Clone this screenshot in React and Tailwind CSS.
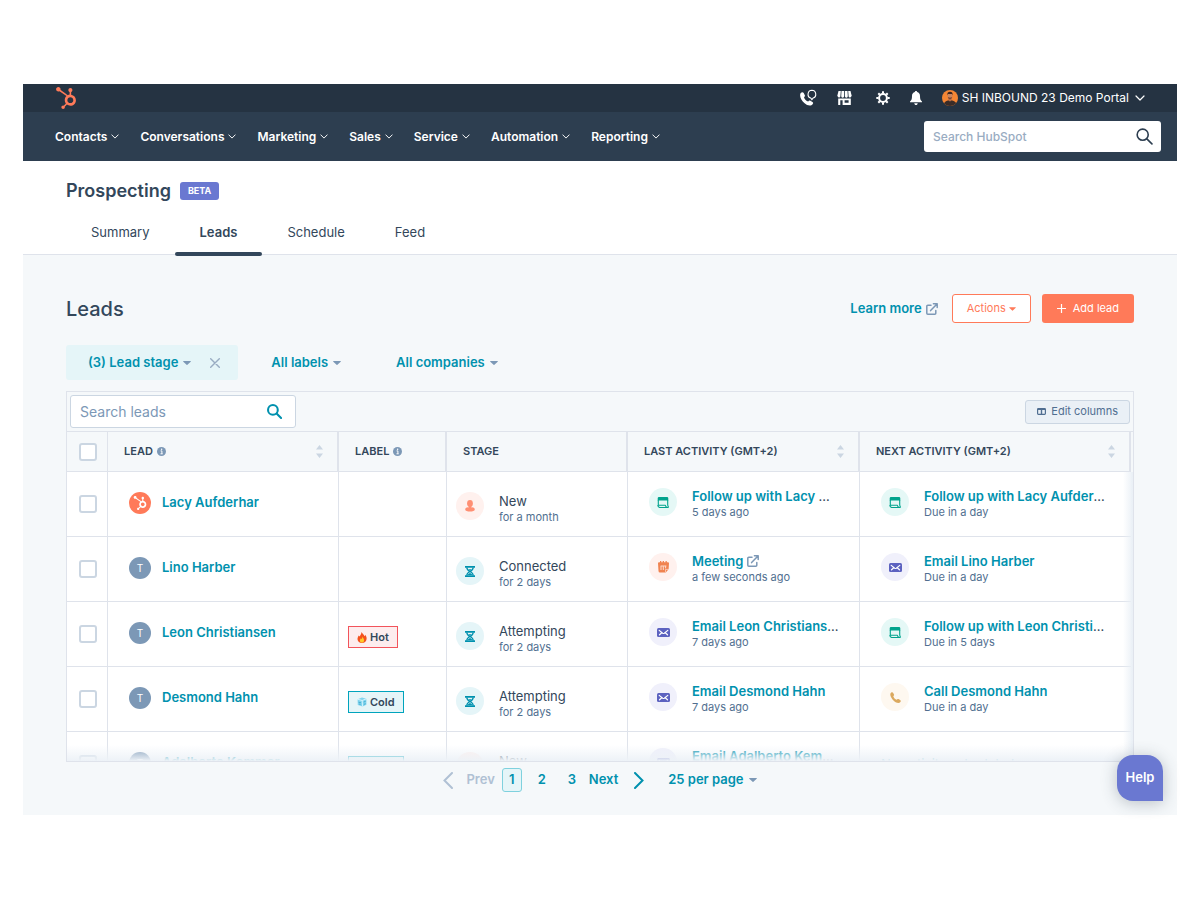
import React from "react";
import { FaHubspot } from "react-icons/fa";

const NAV = ["Contacts", "Conversations", "Marketing", "Sales", "Service", "Automation", "Reporting"];
const TABS = ["Summary", "Leads", "Schedule", "Feed"];

const ROWS = [
  {
    name: "Lacy Aufderhar", brand: true, label: null,
    stage: ["new", "New", "for a month"],
    last: ["task", "Follow up with Lacy ", "5 days ago", "cut"],
    next: ["task", "Follow up with Lacy Aufder", "Due in a day", "cut"],
  },
  {
    name: "Lino Harber", label: null,
    stage: ["wait", "Connected", "for 2 days"],
    last: ["meeting", "Meeting", "a few seconds ago", "external"],
    next: ["email", "Email Lino Harber", "Due in a day"],
  },
  {
    name: "Leon Christiansen", label: "Hot",
    stage: ["wait", "Attempting", "for 2 days"],
    last: ["email", "Email Leon Christians", "7 days ago", "cut"],
    next: ["task", "Follow up with Leon Christi", "Due in 5 days", "cut"],
  },
  {
    name: "Desmond Hahn", label: "Cold",
    stage: ["wait", "Attempting", "for 2 days"],
    last: ["email", "Email Desmond Hahn", "7 days ago"],
    next: ["call", "Call Desmond Hahn", "Due in a day"],
  },
  {
    name: "Adalberto Kemmer", label: "Cold",
    stage: ["new", "New", ""],
    last: ["email", "Email Adalberto Kem", "", "cut"],
    next: null,
  },
];

function Chevron({ className }) {
  return (
    <svg className={className} viewBox="0 0 10 6" fill="none" stroke="currentColor" strokeWidth="1.2" strokeLinecap="round" strokeLinejoin="round" aria-hidden="true">
      <path d="M1 1l4 4 4-4" />
    </svg>
  );
}

function Caret({ className }) {
  return (
    <svg className={className} viewBox="0 0 8 4" fill="currentColor" aria-hidden="true">
      <path d="M0.6 0h6.8a.4.4 0 0 1 .3.7L4.4 3.8a.6.6 0 0 1-.8 0L.3.7A.4.4 0 0 1 .6 0z" />
    </svg>
  );
}

function ExternalIcon() {
  return (
    <svg className="h-3 w-3 shrink-0 text-[#7c98b6]" viewBox="0 0 12 12" fill="none" stroke="currentColor" strokeWidth="1.5" strokeLinecap="round" strokeLinejoin="round" aria-hidden="true">
      <path d="M5 2.2H1.8a1 1 0 0 0-1 1v7a1 1 0 0 0 1 1h7a1 1 0 0 0 1-1V7.4" />
      <path d="M7.4.8h3.8v3.8M11 1L4.6 7.6" />
    </svg>
  );
}

function InfoIcon() {
  return (
    <svg className="h-[9px] w-[9px]" viewBox="0 0 9 9" aria-hidden="true">
      <circle cx="4.5" cy="4.5" r="4.5" fill="#7c98b6" />
      <path d="M3.6 3.9h1.3v2.8M3.5 6.8h2.2" stroke="#fff" strokeWidth="1" fill="none" />
      <circle cx="4.6" cy="2.2" r=".75" fill="#fff" />
    </svg>
  );
}

function Sort({ name }) {
  return (
    <button type="button" aria-label={"Sort by " + name} className="text-[#cbd6e2]">
      <svg className="h-[13px] w-[7px]" viewBox="0 0 7 13" fill="currentColor" aria-hidden="true">
        <path d="M3.5 0L7 4.5H0zM3.5 13L7 8.5H0z" />
      </svg>
    </button>
  );
}

function SearchIcon({ className, weight }) {
  return (
    <svg className={className} viewBox="0 0 16 16" fill="none" stroke="currentColor" strokeWidth={weight} strokeLinecap="round" aria-hidden="true">
      <circle cx="6.3" cy="6.3" r="5.2" />
      <path d="M10.2 10.2L15 15" />
    </svg>
  );
}

function Glyph({ kind }) {
  if (kind === "new")
    return (
      <svg className="h-[12px] w-[10px]" viewBox="0 0 10 12" fill="#ff8f73" aria-hidden="true">
        <ellipse cx="5" cy="3.5" rx="2.9" ry="3.4" />
        <rect x="3.7" y="5" width="2.6" height="3" />
        <path d="M.2 9.6C.2 8 1.6 7.300 3 7.300c.8.6 3.200.6 4 0 1.400 0 2.800.7 2.800 2.300 0 1.400-2.300 2-4.800 2S.2 11 .2 9.600z" />
      </svg>
    );
  if (kind === "wait")
    return (
      <svg className="h-[11px] w-[10px]" viewBox="0 0 10 11" fill="none" stroke="#0091ae" aria-hidden="true">
        <path d="M0 .9h10M0 10.100h10" strokeWidth="1.600" />
        <path d="M1.800 1.500c0 2.200 1.200 3 3.200 4-2 1-3.200 1.800-3.200 4M8.200 1.500c0 2.200-1.200 3-3.200 4 2 1 3.200 1.800 3.200 4" strokeWidth="1.300" />
        <path d="M3.300 3.200h3.400L5 4.700zM2.800 9c.4-1.200 1.200-1.800 2.200-1.800S6.800 7.800 7.200 9z" fill="#0091ae" stroke="none" />
      </svg>
    );
  if (kind === "task")
    return (
      <svg className="h-[11px] w-[12px]" viewBox="0 0 12 11" aria-hidden="true">
        <path d="M2 0h8a1.300 1.300 0 0 1 1.300 1.300V3.600H.7V1.300A1.300 1.300 0 0 1 2 0z" fill="#00a38d" />
        <path d="M1.300 3v5M10.700 3v4.600q0 1.300.6 2.300a.5.5 0 0 1-.5.600H2.600Q.9 9.900.8 8.200h7.600q.2 1.500 1.400 2.100" fill="none" stroke="#00a38d" strokeWidth="1.100" strokeLinejoin="round" />
      </svg>
    );
  if (kind === "meeting")
    return (
      <svg className="h-[12px] w-[11px]" viewBox="0 0 11 12" aria-hidden="true">
        <path d="M2 0h1.300v1.200h1.400V0H6v1.200h1.500V0h1.300v1.200h1.200a1 1 0 0 1 1 1L10.600 8.200 7.800 11.500H2A1.500 1.500 0 0 1 .5 10L0 2.200a1 1 0 0 1 1-1h1z" fill="#f08350" />
        <path d="M3 5.200v3.800M5.300 5.200v3.800M7.600 5.200v2.200M2.600 5h5.800" stroke="#fff1ee" strokeWidth=".8" fill="none" />
        <path d="M7.500 11.200V8.400h3" stroke="#fff1ee" strokeWidth=".6" fill="none" />
      </svg>
    );
  if (kind === "email")
    return (
      <svg className="h-[9px] w-[13px]" viewBox="0 0 13 9" aria-hidden="true">
        <rect width="13" height="9" rx="1.500" fill="#5c62c0" />
        <path d="M2.200 2.400l3.500 2.800q.8.6 1.600 0l3.500-2.800M2.500 6.800l2-1.800M10.500 6.800L8.500 5" stroke="#fff" strokeWidth="1.200" fill="none" strokeLinecap="round" />
      </svg>
    );
  return (
    <svg className="h-[11px] w-[11px]" viewBox="0 0 11 11" fill="#dba95f" aria-hidden="true">
      <path d="M1 .7C1.900 0 2.800.1 3.200.9l.8 1.700c.3.7 0 1.200-.7 1.700.3 1.500 1.900 3.100 3.400 3.500.5-.8 1.100-1 1.800-.7l1.600.9c.8.4.9 1.200.3 2-1.200 1.500-4.200 1.100-6.700-1.300C1 6.200-.8 2.500 1 .7z" />
    </svg>
  );
}

const TINT = {
  new: "bg-[#fff1ee]",
  wait: "bg-[#e5f5f8]",
  task: "bg-[#e5f8f6]",
  meeting: "bg-[#fff1ee]",
  email: "bg-[#f0f0fb]",
  call: "bg-[#fef8f0]",
};

function Bubble({ kind }) {
  return (
    <span className={"flex h-7 w-7 shrink-0 items-center justify-center rounded-full " + TINT[kind]}>
      <Glyph kind={kind} />
    </span>
  );
}

function Activity({ data }) {
  if (!data) return <div className="pl-[21px] pt-6 text-[13px] leading-4 text-[#0091ae]">No activity scheduled</div>;
  const [kind, title, sub, extra] = data;
  return (
    <div className="flex items-start gap-[15px] pl-[21px] pt-4">
      <Bubble kind={kind} />
      <div className="min-w-0 whitespace-nowrap">
        <div className="flex items-center gap-1 text-[13px] leading-4">
          <span>
            <a href="#activity" className="font-semibold text-[#0091ae]">{title}</a>
            {extra === "cut" ? "…" : null}
          </span>
          {extra === "external" ? <ExternalIcon /> : null}
        </div>
        <div className="text-[11px] leading-4 text-[#516f90]">{sub}</div>
      </div>
    </div>
  );
}

function Tag({ kind }) {
  const hot = kind === "Hot";
  return (
    <span className={"inline-flex h-[22px] items-center gap-[3px] border px-2 text-[11px] font-semibold " + (hot ? "border-[#f2545b] bg-[#fdedee]" : "border-[#00a4bd] bg-[#e5f5f8]")}>
      {hot ? (
        <svg className="h-[11px] w-[10px]" viewBox="0 0 10 11" aria-hidden="true">
          <path d="M4.600 0c.4 1.600 2.400 2.400 2.900 4.200.4-.3.600-.8.600-1.400C9.200 4 9.800 5.500 9.600 7 9.300 9.500 7.400 11 5 11S.6 9.400.5 7.200C.4 5.500 1.200 4.500 1.700 3.400c.3.400.5.700.6 1.200C3.400 3.400 4.400 1.900 4.600 0z" fill="#f4511e" />
          <path d="M5.200 4.200c.1 1.300 1.900 2.200 1.900 4.100 0 1.400-.9 2.300-2.100 2.300S2.800 9.700 2.900 8.400C3 7.300 3.600 7 3.800 6.300c.4.200.5.500.6.900.6-.8.900-1.700.8-3z" fill="#ffca28" />
        </svg>
      ) : (
        <svg className="h-[10px] w-[10px]" viewBox="0 0 10 10" aria-hidden="true">
          <path d="M.6 2.200L5 .6l4.400 1.200v6L5.600 9.500.8 8z" fill="#81d4ee" />
          <path d="M.6 2.200l4.600 1.300 4.200-1.700M5.200 3.500l.4 6" stroke="#e8faff" strokeWidth=".8" fill="none" />
          <path d="M1.500 5.200l2.500.6M6.800 5l1.800-.7M2 7l1.600.4M6.900 7.400l1.700-.7" stroke="#38a5c8" strokeWidth=".8" />
        </svg>
      )}
      {kind}
    </span>
  );
}

function Check({ label }) {
  return (
    <input type="checkbox" aria-label={label} className="block h-[18px] w-[18px] appearance-none rounded-[3px] border-2 border-[#cbd6e2] bg-white checked:bg-[#00a4bd]" />
  );
}

function Avatar() {
  return (
    <svg className="h-4 w-4" viewBox="0 0 16 16" aria-hidden="true">
      <defs>
        <clipPath id="avatar-round"><circle cx="8" cy="8" r="8" /></clipPath>
      </defs>
      <g clipPath="url(#avatar-round)">
        <rect width="16" height="16" fill="#f58634" />
        <path d="M1.500 16c0-3.500 2-5.500 6.500-6 4.500.5 7 2.500 7 6z" fill="#3a2c28" />
        <path d="M6.400 8h3.200v2.600L8 11.600l-1.600-1z" fill="#b96f49" />
        <ellipse cx="8" cy="5.800" rx="2.300" ry="3.100" fill="#c98560" />
        <path d="M5.400 5.400C5 2.800 6.200 1.700 8 1.700s3 1.100 2.600 3.700L10 4H6z" fill="#3b2520" />
        <path d="M5.800 6.800c.2 1.600.9 2.400 2.200 2.400s2-.8 2.200-2.400l-1 .6H6.800z" fill="#7a4530" />
      </g>
    </svg>
  );
}

function TopBar() {
  return (
    <div className="flex h-7 items-center justify-between bg-[#253342] pl-8 pr-8">
      <a href="#home" aria-label="HubSpot" className="text-[#ff7a59]"><FaHubspot className="h-[22px] w-[22px]" /></a>
      <div className="flex items-center text-white">
        <button type="button" aria-label="Calling" className="mr-5">
          <svg className="h-[18px] w-[18px]" viewBox="0 0 18 18" aria-hidden="true">
            <path d="M2 3.700C3 2.900 4.200 3 4.700 4L5.800 6.200c.4.8.1 1.400-.8 2 .5 1.800 2.400 3.900 4.200 4.300.7-1 1.300-1.200 2.200-.8l2 1.200c.9.5 1 1.400.2 2.400-1.500 1.900-5.300 1.600-8.300-1.300C1.700 10.700-.1 5.800 2 3.700z" fill="currentColor" />
            <path d="M12.900 1.300a4 4 0 0 1 1.100 7.800l-1.100 1.400-1.100-1.400a4 4 0 0 1 1.100-7.800z" fill="none" stroke="currentColor" strokeWidth="1.100" />
          </svg>
        </button>
        <button type="button" aria-label="Marketplace" className="mr-6">
          <svg className="h-[14px] w-[15px]" viewBox="0 0 15 14" fill="currentColor" aria-hidden="true">
            <path d="M1.500 0h2.300l-.4 5.200a1.300 1.300 0 0 1-2.600 0H.2zM4.500 0h2.600v5.200a1.400 1.400 0 0 1-2.900 0zM7.900 0h2.600l.3 5.200a1.400 1.400 0 0 1-2.900 0zM11.200 0h2.300l1.300 5.200h-.6a1.300 1.300 0 0 1-2.600 0z" />
            <path fillRule="evenodd" d="M1.200 7.400h12.600V14H1.200zM3.300 9.300v4.700h2.300V9.300zm4.300 0v2.500h4V9.300z" />
          </svg>
        </button>
        <button type="button" aria-label="Settings" className="mr-5">
          <svg className="h-[14px] w-[14px]" viewBox="0 0 14 14" fill="none" stroke="currentColor" aria-hidden="true">
            <circle cx="7" cy="7" r="3.900" strokeWidth="2" />
            <path d="M7 .3v2.200M7 11.500v2.200M.3 7h2.200M11.500 7h2.200M2.300 2.300l1.500 1.500M10.200 10.200l1.500 1.500M11.700 2.300l-1.500 1.500M3.800 10.200l-1.500 1.500" strokeWidth="2" />
          </svg>
        </button>
        <button type="button" aria-label="Notifications" className="mr-5">
          <svg className="h-[14px] w-[12px]" viewBox="0 0 12 14" fill="currentColor" aria-hidden="true">
            <path d="M6 0c.7 0 1.100.4 1.100 1C9 1.500 10 3 10 5c0 3 .5 4.300 2 5.400v.9H0v-.9C1.500 9.300 2 8 2 5c0-2 1-3.500 2.900-4C4.900.4 5.300 0 6 0zM4.300 12.200h3.400C7.600 13.300 7 14 6 14s-1.600-.7-1.700-1.800z" />
          </svg>
        </button>
        <button type="button" className="flex items-center gap-1 text-xs">
          <Avatar />
          SH INBOUND 23 Demo Portal
          <Chevron className="ml-[2px] h-[6px] w-[10px]" />
        </button>
      </div>
    </div>
  );
}

function MainNav() {
  return (
    <div className="flex h-[49px] items-center justify-between bg-[#2d3e50] pl-8 pr-4">
      <nav className="flex gap-[21px] text-xs font-semibold text-white">
        {NAV.map((n) => (
          <button type="button" key={n} className="flex items-center gap-1">
            {n}
            <Chevron className="h-[5px] w-2" />
          </button>
        ))}
      </nav>
      <label className="flex h-[31px] w-[237px] items-center rounded-[3px] bg-white pl-[9px] pr-2">
        <input type="text" aria-label="Search HubSpot" placeholder="Search HubSpot" className="min-w-0 flex-1 bg-transparent text-xs font-medium text-[#33475b] outline-none placeholder:text-[#99acc2]" />
        <SearchIcon className="h-[17px] w-[17px] text-[#2d3e50]" weight="1.5" />
      </label>
    </div>
  );
}

function Th({ children, sort }) {
  return (
    <th scope="col" className="border-r-2 border-[#dfe3eb] py-0 pl-4 text-left text-[11px] font-semibold">
      <div className="flex items-center justify-between pr-[14px]">
        <span className="flex items-center gap-1">{children}</span>
        {sort ? <Sort name={sort} /> : null}
      </div>
    </th>
  );
}

function LeadsTable() {
  return (
    <div className="relative h-[330px] overflow-hidden border-t border-[#dfe3eb] pr-[2px]">
      <table className="w-full table-fixed border-separate border-spacing-0">
        <colgroup>
          <col className="w-[41px]" />
          <col className="w-[231px]" />
          <col className="w-[108px]" />
          <col className="w-[181px]" />
          <col className="w-[232px]" />
          <col />
        </colgroup>
        <thead>
          <tr className="h-[39px] bg-[#f5f8fa]">
            <th scope="col" className="border-r border-[#dfe3eb] py-0 pl-3"><Check label="Select all leads" /></th>
            <Th sort="lead">LEAD <InfoIcon /></Th>
            <Th>LABEL <InfoIcon /></Th>
            <Th>STAGE</Th>
            <Th sort="last activity">LAST ACTIVITY (GMT+2)</Th>
            <Th sort="next activity">NEXT ACTIVITY (GMT+2)</Th>
          </tr>
        </thead>
        <tbody className="bg-white [&_td]:border-t [&_td]:border-r [&_td]:border-[#dfe3eb] [&_td]:p-0">
          {ROWS.map((r) => (
            <tr key={r.name} className="h-[65px] align-top">
              <td><div className="pl-3 pt-[23px]"><Check label={"Select " + r.name} /></div></td>
              <td>
                <div className="flex items-center gap-[11px] pl-[21px] pt-5">
                  {r.brand ? (
                    <span className="flex h-[22px] w-[22px] items-center justify-center rounded-full bg-[#ff7a59] text-white"><FaHubspot className="h-[14px] w-[14px]" /></span>
                  ) : (
                    <span className="flex h-[22px] w-[22px] items-center justify-center rounded-full bg-[#7c98b6] text-[10px] text-white">T</span>
                  )}
                  <a href="#lead" className="text-[13px] font-semibold text-[#0091ae]">{r.name}</a>
                </div>
              </td>
              <td><div className="flex pl-[9px] pt-6">{r.label ? <Tag kind={r.label} /> : null}</div></td>
              <td>
                <div className="flex items-start gap-[15px] pl-[9px] pt-5">
                  <Bubble kind={r.stage[0]} />
                  <div className="pt-px">
                    <div className="text-[13px] leading-4">{r.stage[1]}</div>
                    <div className="text-[11px] leading-4 text-[#516f90]">{r.stage[2]}</div>
                  </div>
                </div>
              </td>
              <td><Activity data={r.last} /></td>
              <td className="!border-r-0"><Activity data={r.next} /></td>
            </tr>
          ))}
        </tbody>
      </table>
      <div className="pointer-events-none absolute bottom-0 right-0 top-10 w-[10px] bg-gradient-to-r from-[#eaf0f6]/0 to-[#eaf0f6]" />
      <div className="pointer-events-none absolute inset-x-0 bottom-0 h-4 bg-gradient-to-b from-[#f5f8fa]/0 to-[#edf2f7]" />
    </div>
  );
}

export default function App() {
  return (
    <div className="bg-white px-[23px] pb-[84px] pt-[84px] font-['Inter','Liberation_Sans',sans-serif] text-[#33475b]">
      <div className="relative">
        <header>
          <TopBar />
          <MainNav />
        </header>
        <div className="border-b border-[#dfe3eb] bg-white pl-[43px]">
          <div className="flex items-center gap-[9px] pt-4">
            <h1 className="text-lg font-semibold leading-7">Prospecting</h1>
            <span className="rounded-[3px] bg-[#6a78d1] px-2 text-[9px] font-bold leading-[18px] text-white">BETA</span>
          </div>
          <nav className="-mb-[2px] flex pt-[17px] text-[13px] leading-5">
            {TABS.map((t) => (
              <a
                key={t}
                href="#tab"
                className={"relative px-[25px] pb-[14px] " + (t === "Leads" ? "font-semibold after:absolute after:inset-x-0 after:bottom-0 after:h-1 after:rounded-sm after:bg-[#33475b]" : "")}
              >
                {t}
              </a>
            ))}
          </nav>
        </div>
        <main className="bg-[#f5f8fa] px-[43px] pb-[23px] pt-[39px]">
          <div className="flex items-center justify-between">
            <h2 className="text-xl font-medium leading-7">Leads</h2>
            <div className="flex items-center">
              <a href="#learn" className="mr-[14px] flex items-center gap-1 text-[13px] font-semibold text-[#0091ae]">Learn more <ExternalIcon /></a>
              <button type="button" className="mr-[11px] flex h-[29px] items-center gap-[3px] rounded-[3px] border border-[#ff7a59] bg-white px-[14px] text-[11px] text-[#ff7a59]">
                Actions <Caret className="h-1 w-[7px]" />
              </button>
              <button type="button" className="flex h-[29px] items-center gap-[7px] rounded-[3px] bg-[#ff7a59] px-[15px] text-[11px] text-white">
                <svg className="h-[9px] w-[9px]" viewBox="0 0 9 9" stroke="currentColor" strokeWidth="1.200" aria-hidden="true"><path d="M4.500 0v9M0 4.500h9" /></svg>
                Add lead
              </button>
            </div>
          </div>
          <div className="mt-[22px] flex items-center text-[13px] font-semibold text-[#0091ae]">
            <div className="flex h-[35px] items-center rounded-[3px] bg-[#e5f5f8] pl-[22px] pr-[18px]">
              <button type="button" className="flex items-center gap-[5px]">(3) Lead stage <Caret className="h-1 w-2 text-[#7c98b6]" /></button>
              <button type="button" aria-label="Clear lead stage" className="ml-[19px] text-[#99acc2]">
                <svg className="h-[10px] w-[10px]" viewBox="0 0 10 10" stroke="currentColor" strokeWidth="1.400" strokeLinecap="round" aria-hidden="true"><path d="M.7.7l8.600 8.600M9.300.7L.7 9.300" /></svg>
              </button>
            </div>
            <button type="button" className="ml-[33px] flex items-center gap-[5px]">All labels <Caret className="h-1 w-2 text-[#7c98b6]" /></button>
            <button type="button" className="ml-[55px] flex items-center gap-[5px]">All companies <Caret className="h-1 w-2 text-[#7c98b6]" /></button>
          </div>
          <div className="mt-[11px] border border-[#dfe3eb]">
            <div className="flex items-center justify-between p-[3px]">
              <label className="flex h-[33px] w-[226px] items-center rounded-[3px] border border-[#cbd6e2] bg-white pl-[9px] pr-[13px]">
                <input type="text" aria-label="Search leads" placeholder="Search leads" className="min-w-0 flex-1 bg-transparent text-sm text-[#33475b] outline-none placeholder:text-[#7c98b6]" />
                <SearchIcon className="h-[15px] w-[15px] text-[#0091ae]" weight="2.2" />
              </label>
              <button type="button" className="flex h-6 items-center gap-[5px] rounded-[3px] border border-[#cbd6e2] bg-[#eaf0f6] px-[11px] text-[11px] text-[#506e91]">
                <svg className="h-[7px] w-[9px]" viewBox="0 0 9 7" aria-hidden="true">
                  <rect x=".6" y=".6" width="7.800" height="5.800" rx=".8" fill="none" stroke="currentColor" strokeWidth="1.200" />
                  <path d="M.6 1.400h7.800M4.500 1v5" stroke="currentColor" strokeWidth="1.400" />
                </svg>
                Edit columns
              </button>
            </div>
            <LeadsTable />
          </div>
          <div className="mt-[6px] flex h-6 items-center justify-center text-[13px] font-semibold text-[#0091ae]">
            <button type="button" disabled className="mr-[7px] flex items-center gap-[13px] text-[#b0c1d4]">
              <svg className="h-[17px] w-[10px]" viewBox="0 0 10 17" fill="none" stroke="currentColor" strokeWidth="2" strokeLinecap="round" aria-hidden="true"><path d="M9 1L1.500 8.500 9 16" /></svg>
              Prev
            </button>
            <button type="button" className="h-6 w-5 rounded-[3px] border border-[#7fd1de] bg-[#e5f5f8]">1</button>
            <button type="button" className="ml-[10px] w-5">2</button>
            <button type="button" className="ml-[10px] w-5">3</button>
            <button type="button" className="ml-[7px] flex items-center gap-4">
              Next
              <svg className="h-[17px] w-[10px]" viewBox="0 0 10 17" fill="none" stroke="currentColor" strokeWidth="2" strokeLinecap="round" aria-hidden="true"><path d="M1 1l7.500 7.500L1 16" /></svg>
            </button>
            <button type="button" className="ml-6 flex items-center gap-[5px]">25 per page <Caret className="h-1 w-2 text-[#7c98b6]" /></button>
          </div>
        </main>
        <button type="button" className="absolute bottom-[14px] right-[14px] h-[46px] w-[46px] rounded-2xl rounded-br-none bg-[#6a78d1] text-[13px] font-semibold text-white shadow-[0_2px_16px_rgba(45,62,80,0.3)]">Help</button>
      </div>
    </div>
  );
}
